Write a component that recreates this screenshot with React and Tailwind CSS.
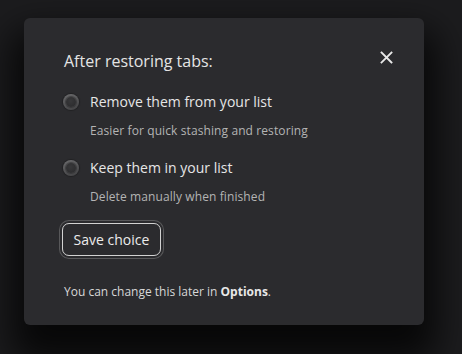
import React, { useState } from "react";

const options = [
	{ id: "remove", label: "Remove them from your list", hint: "Easier for quick stashing and restoring" },
	{ id: "keep", label: "Keep them in your list", hint: "Delete manually when finished" }
];

function Radio({ checked }) {
	return (
		<span className="flex h-[16px] w-[16px] shrink-0 items-center justify-center rounded-full bg-[linear-gradient(160deg,#6c6c6e,#414143)] shadow-[0_0_1px_1px_rgba(0,0,0,0.25)]">
			<span className="flex h-[10px] w-[10px] items-center justify-center rounded-full bg-[radial-gradient(circle_at_45%_40%,#38383a,#29292b)] shadow-[0_0_1px_1px_rgba(40,40,42,0.6)]">
				{checked && <span className="h-[5px] w-[5px] rounded-full bg-[#e6e6e6]" />}
			</span>
		</span>
	);
}

export default function App() {
	const [choice, setChoice] = useState(null);

	return (
		<div className="h-[354px] w-full overflow-hidden bg-[#1c1c1e] px-6 pt-[18px] font-['Open_Sans',sans-serif]">
			<div className="relative h-[307px] w-[400px] rounded-md bg-[#2b2b2e] px-10 pt-[32px] shadow-[0_24px_36px_12px_rgba(0,0,0,0.75)]">
				<button className="absolute right-[31px] top-[32px] flex h-[14px] w-[14px] items-center justify-center text-[#e8e8e8]">
					<svg width="13" height="13" viewBox="0 0 13 13" fill="none" stroke="currentColor" strokeWidth="1.8" strokeLinecap="square">
						<path d="M1.5 1.5l10 10M11.5 1.5l-10 10" />
					</svg>
				</button>
				<h2 className="text-[16px] leading-[22px] text-[#e4e4e4]">After restoring tabs:</h2>
				<div className="mt-[20px] flex flex-col gap-[18px]">
					{options.map(o => (
						<label key={o.id} className="flex cursor-pointer flex-col" onClick={() => setChoice(o.id)}>
							<span className="-ml-[1px] flex items-center gap-[11px]">
								<Radio checked={choice === o.id} />
								<span className="text-[14px] leading-[20px] text-[#e6e6e6]">{o.label}</span>
							</span>
							<span className="mt-[10px] pl-[26px] text-[12px] leading-[18px] tracking-[0.1px] text-[#b4b4b4]">{o.hint}</span>
						</label>
					))}
				</div>
				<button className="-ml-[2px] mt-[17px] rounded-[7px] border border-[#d2d2d2] px-[10.5px] py-[5.5px] text-[14px] leading-[20px] text-[#ececec] ring-1 ring-[#58585a] ring-offset-2 ring-offset-[#2b2b2e]">
					Save choice
				</button>
				<p className="mt-[27px] text-[12px] leading-[18px] text-[#d8d8d8]">
					You can change this later in <b className="font-bold text-[#e8e8e8]">Options</b>.
				</p>
			</div>
		</div>
	);
}
